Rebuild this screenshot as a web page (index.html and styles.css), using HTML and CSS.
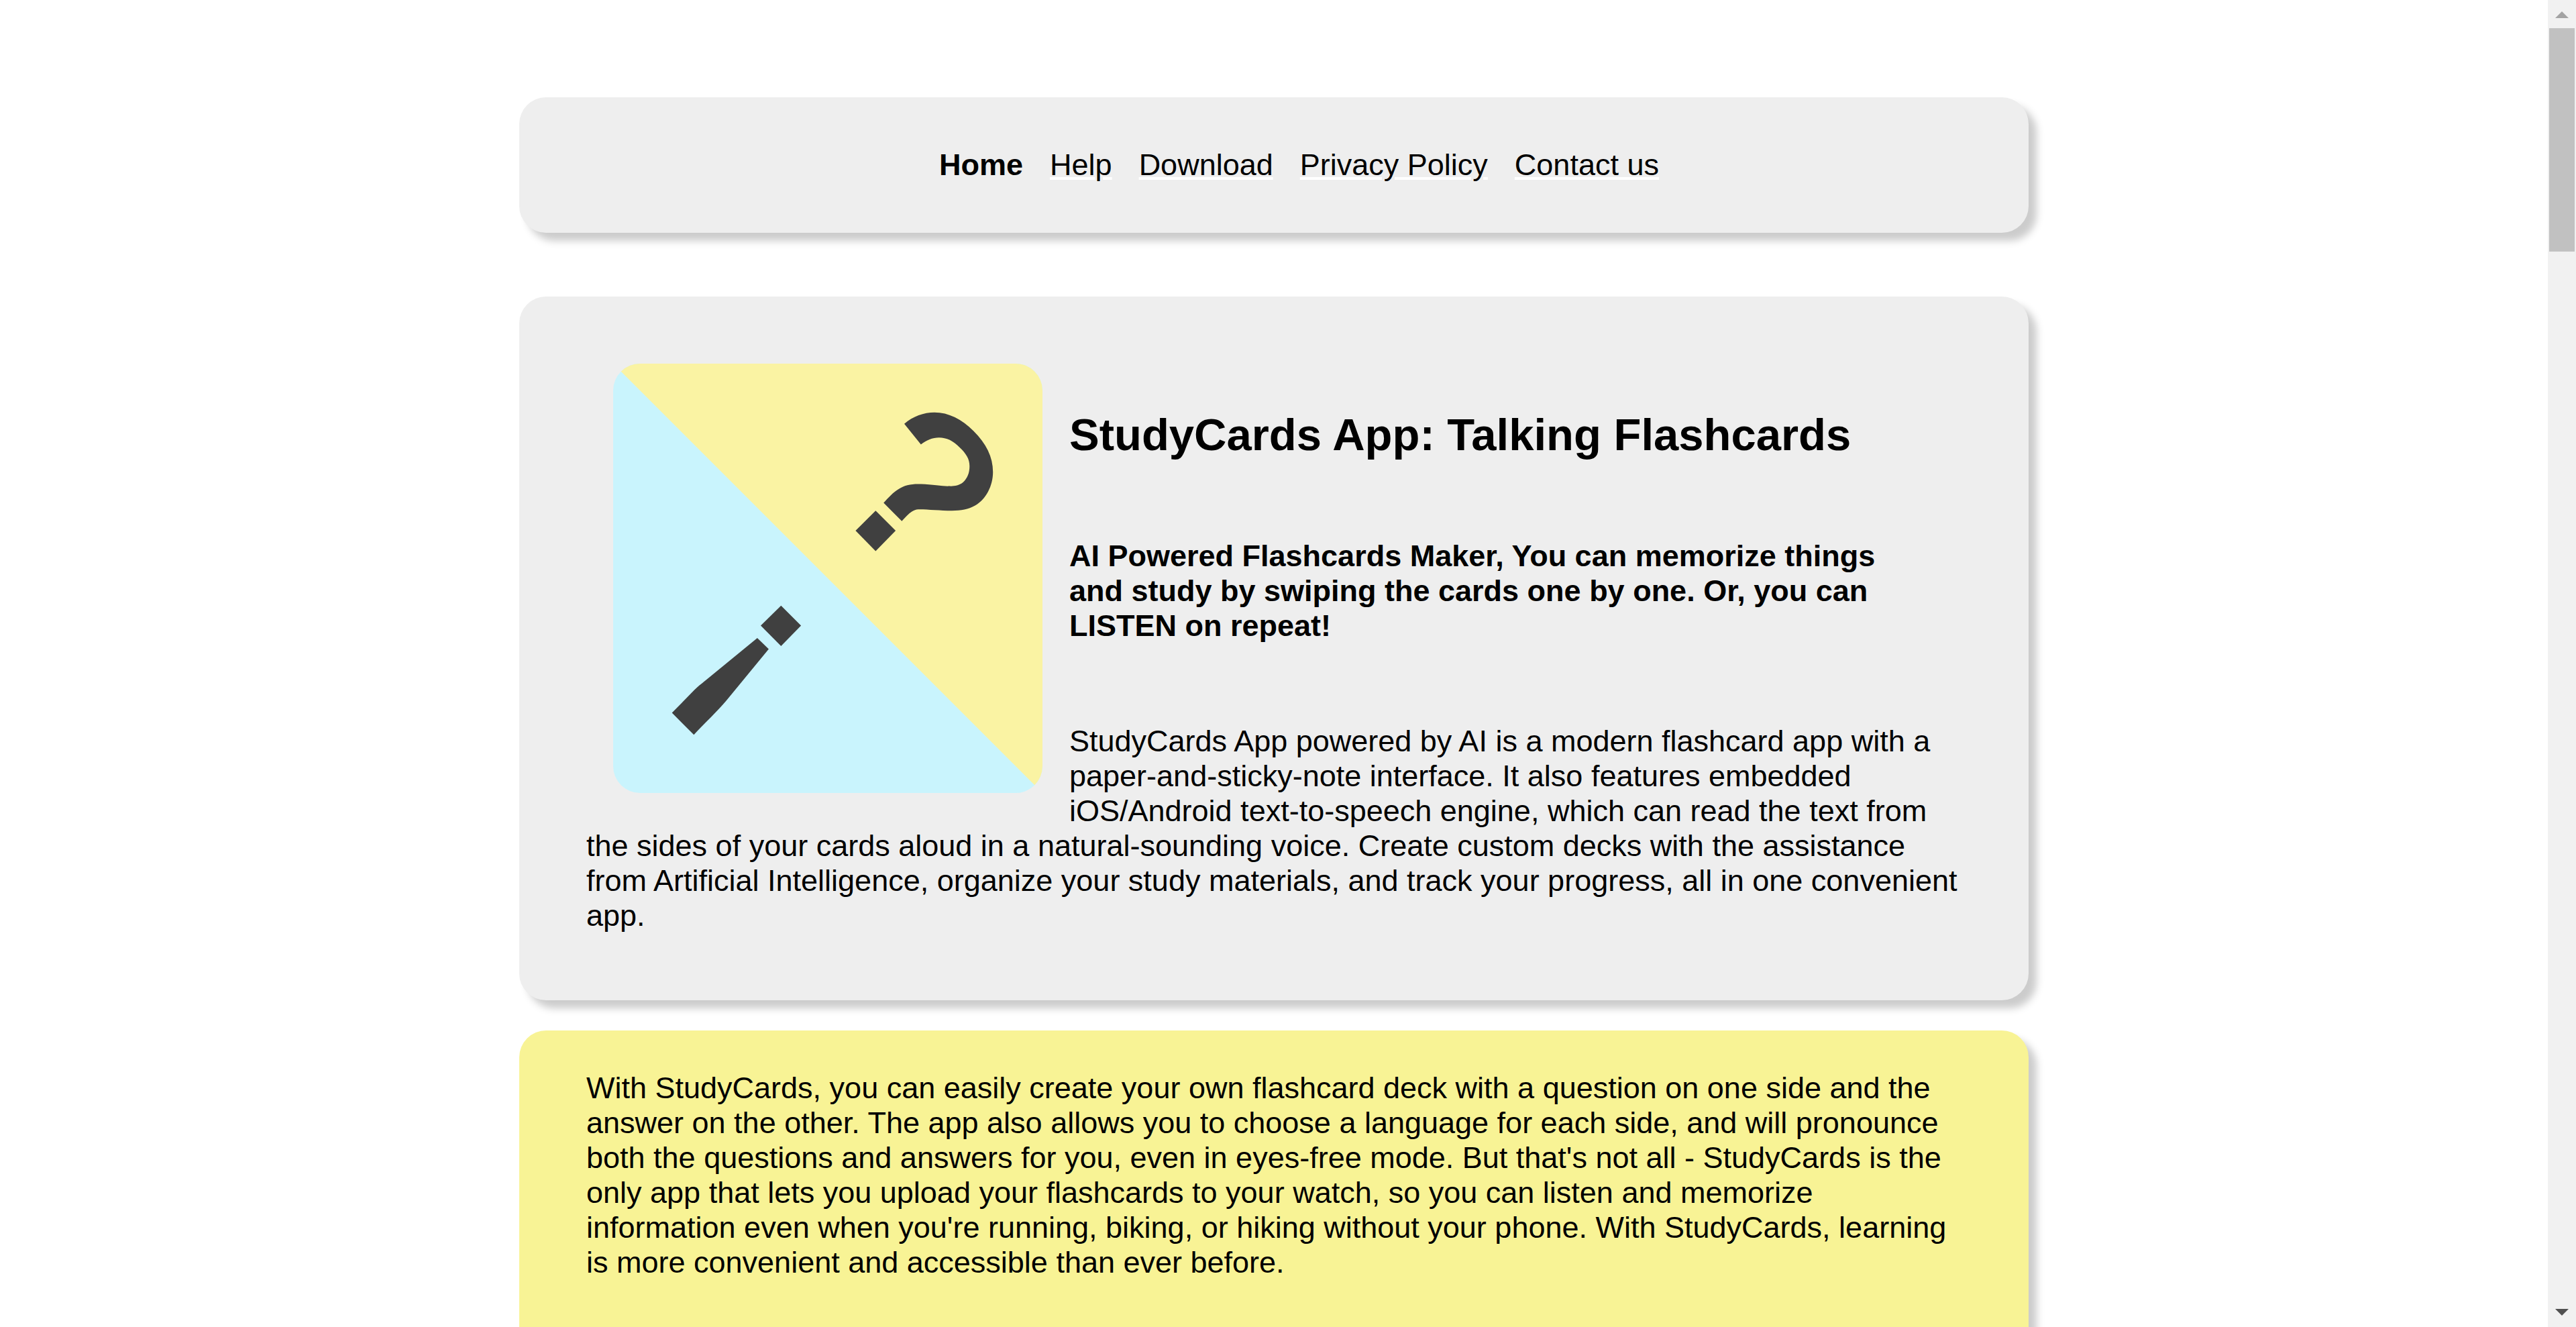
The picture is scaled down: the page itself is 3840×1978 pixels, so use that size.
FILE: index.html
```html
<!DOCTYPE html>
<html lang="en">
<head>
<meta charset="utf-8">
<title>StudyCards App: Talking Flashcards</title>
<link rel="stylesheet" href="styles.css">
</head>
<body>
<div class="viewport">
  <div class="page">
    <nav class="card menu" aria-label="Main">
      <ul class="menu-list">
        <li><a class="menu-link current" href="#home" aria-current="page">Home</a></li>
        <li><a class="menu-link" href="#help">Help</a></li>
        <li><a class="menu-link" href="#download">Download</a></li>
        <li><a class="menu-link" href="#privacy">Privacy Policy</a></li>
        <li><a class="menu-link" href="#contact">Contact us</a></li>
      </ul>
    </nav>
    <main class="content">
      <section class="card intro">
        <svg class="logo" viewBox="0 0 640 640" role="img" aria-label="StudyCards logo">
          <rect width="640" height="640" fill="#c9f4fd"/>
          <path d="M0 0H640V640Z" fill="#faf3a3"/>
          <g fill="#404040">
            <path d="M391.3 219.2L421.1 249.1L391.3 279.5L361.4 249.1Z"/>
            <path d="M434 89.8C447 78.500 463 72.800 479 72.800C500 72.800 520 83 537.300 100.500C556 119 566.200 139 566.200 161.600C566.200 182 556 202.500 539.600 211.600C529 217.500 519 219.200 505.100 219.200C485 219.200 463 216.500 452.300 217.400C444 219 437 228 430.300 234.800L403.200 207.600C410 200 418 191.500 424.800 187.500C435 180.500 445 179 459.200 179.500C476 180 492 183 500.500 182.600C508 183 515 182 521.200 177.300C528 171 531.300 163 531.300 152.700C531.300 142 526 134 516.600 125C507 115 497 110.300 485.800 110.300C476 110.300 467 114 458.800 120.600Z"/>
            <path d="M250.300 360.700L280.100 390.600L250.300 421L220 390.600Z"/>
            <path d="M214.900 409L231.900 425.500L169 502C155 519 137 535 120.300 553.200L87.700 520.600L121 486.500C127 480.500 132 477 138 472Z"/>
          </g>
        </svg>
        <h1 class="title">StudyCards App: Talking Flashcards</h1>
        <h2 class="subtitle">AI Powered Flashcards Maker, You can memorize things and study by swiping the cards one by one. Or, you can LISTEN on repeat!</h2>
        <p class="text">StudyCards App powered by AI is a modern flashcard app with a paper-and-sticky-note interface. It also features embedded iOS/Android text-to-speech engine, which can read the text from the sides of your cards aloud in a natural-sounding voice. Create custom decks with the assistance from Artificial Intelligence, organize your study materials, and track your progress, all in one convenient app.</p>
      </section>
      <section class="card note">
        <p class="text">With StudyCards, you can easily create your own flashcard deck with a question on one side and the answer on the other. The app also allows you to choose a language for each side, and will pronounce both the questions and answers for you, even in eyes-free mode. But that's not all - StudyCards is the only app that lets you upload your flashcards to your watch, so you can listen and memorize information even when you're running, biking, or hiking without your phone. With StudyCards, learning is more convenient and accessible than ever before.</p>
      </section>
    </main>
  </div>
  <div class="scrollbar" aria-hidden="true">
    <svg class="arrow" viewBox="0 0 20 10"><path d="M10 0L20 10H0Z" fill="#a3a3a3"/></svg>
    <div class="track"><div class="thumb"></div></div>
    <svg class="arrow" viewBox="0 0 20 10"><path d="M0 0H20L10 10Z" fill="#505050"/></svg>
  </div>
</div>
</body>
</html>
```
FILE: styles.css
```css
* {
  box-sizing: border-box;
}

body {
  margin: 0;
  background: #fff;
  color: #000;
  font-family: Arial, "Liberation Sans", sans-serif;
  font-size: 45px;
  line-height: 52px;
}

.viewport {
  display: grid;
  grid-template-columns: 1fr 42px;
  height: 100vh;
  overflow: hidden;
}

.page {
  display: flex;
  flex-direction: column;
  align-items: center;
  gap: 95px;
  min-height: 0;
  padding: 145px 40px 0;
  overflow: hidden;
}

.content {
  display: flex;
  flex-direction: column;
  gap: 45px;
  width: 100%;
  max-width: 2250px;
}

.card {
  flex-shrink: 0;
  width: 100%;
  max-width: 2250px;
  border-radius: 40px;
  background: #eee;
  box-shadow: 12px 12px 12px #ccc;
}

.menu {
  padding: 75px 100px;
}

.menu-list {
  display: flex;
  flex-wrap: wrap;
  justify-content: center;
  gap: 40px;
  margin: 0;
  padding: 0 0 0 75px;
  list-style: none;
}

.menu-link {
  color: #000;
  text-decoration: underline #fff 4px;
  text-underline-offset: 3px;
}

.menu-link.current {
  font-weight: bold;
  text-decoration: none;
}

.intro {
  padding: 100px;
}

.logo {
  float: left;
  width: 640px;
  height: 640px;
  margin: 0 40px 40px;
  border-radius: 40px;
}

.title {
  margin: 0;
  padding-top: 67px;
  font-size: 67px;
  line-height: 78px;
}

.subtitle {
  margin: 116px 0 120px;
  padding-right: 60px;
  font-size: 45px;
}

.text {
  margin: 0;
}

.note {
  min-height: 600px;
  padding: 60px 100px;
  background: #f8f395;
}

.scrollbar {
  display: flex;
  flex-direction: column;
  align-items: center;
  justify-content: space-between;
  padding: 17px 2px;
  background: #f1f1f1;
}

.arrow {
  width: 20px;
  height: 10px;
}

.track {
  flex: 1;
  align-self: stretch;
  padding: 15px 0;
}

.thumb {
  height: 333px;
  background: #c1c1c1;
}
```
